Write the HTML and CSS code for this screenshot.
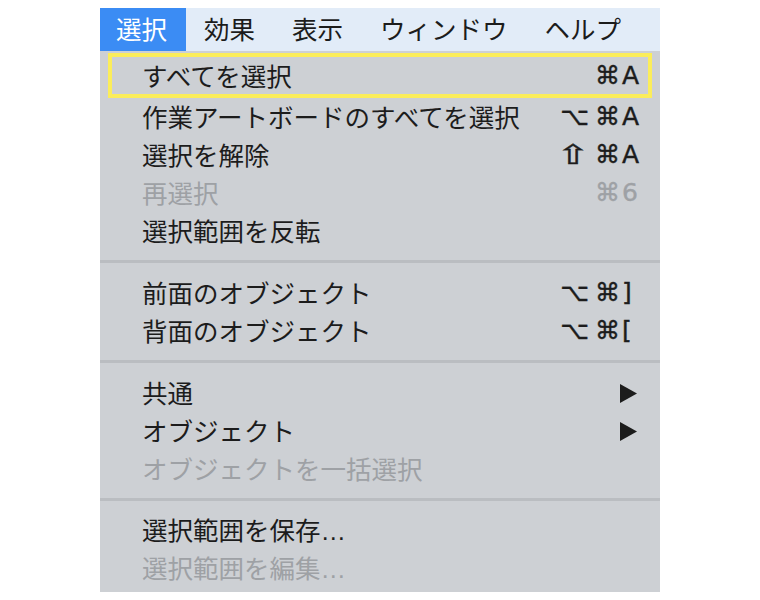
FILE: index.html
```html
<!DOCTYPE html>
<html lang="ja">
<head>
    <meta charset="UTF-8">
    <title>選択メニュー</title>
    <link rel="stylesheet" href="styles.css">
</head>
<body>
<div class="menu-wrap">
    <!-- Menu bar -->
    <div class="menubar">
        <span class="menubar-item active">選択</span>
        <span class="menubar-item">効果</span>
        <span class="menubar-item">表示</span>
        <span class="menubar-item">ウィンドウ</span>
        <span class="menubar-item">ヘルプ</span>
    </div>

    <!-- Dropdown -->
    <div class="menu">
        <div class="item focused">
            <span class="label">すべてを選択</span>
            <span class="keys"><span class="mod">⌘</span><span class="key">A</span></span>
        </div>
        <div class="item">
            <span class="label">作業アートボードのすべてを選択</span>
            <span class="keys"><span class="mod">⌥</span><span class="mod">⌘</span><span class="key">A</span></span>
        </div>
        <div class="item">
            <span class="label">選択を解除</span>
            <span class="keys"><span class="mod shift">⇧</span><span class="mod">⌘</span><span class="key">A</span></span>
        </div>
        <div class="item disabled">
            <span class="label">再選択</span>
            <span class="keys"><span class="mod">⌘</span><span class="key">6</span></span>
        </div>
        <div class="item">
            <span class="label">選択範囲を反転</span>
        </div>

        <div class="separator"></div>

        <div class="item">
            <span class="label">前面のオブジェクト</span>
            <span class="keys"><span class="mod">⌥</span><span class="mod">⌘</span><span class="key">]</span></span>
        </div>
        <div class="item">
            <span class="label">背面のオブジェクト</span>
            <span class="keys"><span class="mod">⌥</span><span class="mod">⌘</span><span class="key">[</span></span>
        </div>

        <div class="separator"></div>

        <div class="item">
            <span class="label">共通</span>
            <span class="keys"><span class="key"><svg class="arrow" width="17" height="19" viewBox="0 0 17 19"><polygon points="0,0 17,9.5 0,19"/></svg></span></span>
        </div>
        <div class="item">
            <span class="label">オブジェクト</span>
            <span class="keys"><span class="key"><svg class="arrow" width="17" height="19" viewBox="0 0 17 19"><polygon points="0,0 17,9.5 0,19"/></svg></span></span>
        </div>
        <div class="item disabled">
            <span class="label">オブジェクトを一括選択</span>
        </div>

        <div class="separator"></div>

        <div class="item">
            <span class="label">選択範囲を保存<span class="ell">…</span></span>
        </div>
        <div class="item disabled">
            <span class="label">選択範囲を編集<span class="ell">…</span></span>
        </div>
    </div>
</div>
</body>
</html>
```

FILE: styles.css
```css
body {
    margin: 0;
    background: #fff;
    font-family: "Noto Sans CJK JP", sans-serif;
    color: #1c1c1c;
}
.menu-wrap {
    width: 560px;
    margin: 8px 0 0 100px;
}

/* Menu bar */
.menubar {
    display: flex;
    height: 43px;
    background: #e2ecf8;
    font-size: 25.5px;
}
.menubar-item {
    padding: 0 18.5px;
    line-height: 40px;
}
.menubar-item:first-child {
    padding-left: 16px;
}
.menubar-item.active {
    background: #3b8cf4;
    color: #fff;
}

/* Dropdown */
.menu {
    background: #cdd0d4;
    padding: 2px 0 4px;
}
.item {
    display: flex;
    align-items: center;
    justify-content: space-between;
    height: 38px;
    padding: 0 18px 0 42px;
    font-size: 25.5px;
    line-height: 36px;
}
.item .label {
    margin-bottom: 2px;
}
.item.focused {
    height: 37px;
    margin: 0 8px;
    border: 4px solid #fbed5a;
    padding: 0 6px 0 30px;
}
.item.disabled {
    color: #9ea1a5;
}
.ell {
    font-family: "Liberation Sans", sans-serif;
}

/* Key equivalents */
.keys {
    display: flex;
    align-items: center;
    font-family: "DejaVu Sans", sans-serif;
    font-size: 25px;
    -webkit-text-stroke: 0.4px currentColor;
}
.mod {
    margin-left: 6px;
}
.mod.shift {
    display: inline-block;
    font-size: 27px;
    transform: scaleX(1.5);
    margin-right: 4px;
}
.key {
    width: 22px;
    padding-left: 2px;
    box-sizing: border-box;
    display: flex;
    align-items: center;
}
.arrow {
    margin-left: -2px;
    fill: #1c1c1c;
}
.separator {
    height: 3px;
    background: #babdc1;
    margin: 10px 0 11px;
}
```
